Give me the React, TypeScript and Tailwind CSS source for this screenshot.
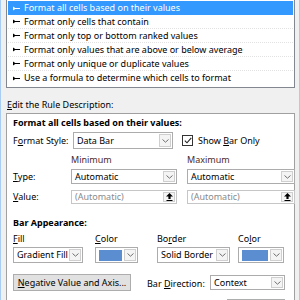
import React from 'react';

const font = { fontFamily: '"Noto Sans", "Open Sans", sans-serif' };

const rules = [
    'Format all cells based on their values',
    'Format only cells that contain',
    'Format only top or bottom ranked values',
    'Format only values that are above or below average',
    'Format only unique or duplicate values',
    'Use a formula to determine which cells to format',
];

const RuleArrow: React.FC<{ color: string }> = ({ color }) => (
    <svg width="7" height="5" viewBox="0 0 7 5" className="shrink-0">
        <path d="M0 0.5 L3 2.5 L0 4.5 Z" fill={color} />
        <rect x="0" y="2" width="7" height="1" fill={color} />
    </svg>
);

const Chevron = () => (
    <svg width="7" height="4" viewBox="0 0 7 4">
        <path d="M0.5 0.5 L3.5 3.2 L6.5 0.5" fill="none" stroke="#707070" strokeWidth="1" />
    </svg>
);

const UploadIcon = () => (
    <svg width="7" height="8" viewBox="0 0 7 8">
        <path d="M3.5 0 L7 3.5 L4.6 3.5 L4.6 6 L2.4 6 L2.4 3.5 L0 3.5 Z" fill="#000" />
        <rect x="0.5" y="7" width="6" height="1" fill="#000" />
    </svg>
);

// underline a single letter like a windows access key
const Key: React.FC<{ text: string; at: number }> = ({ text, at }) => (
    <span>
        {text.slice(0, at)}
        <span className="underline underline-offset-1">{text[at]}</span>
        {text.slice(at + 1)}
    </span>
);

const Dropdown: React.FC<{ w: string; h?: string; children?: React.ReactNode }> = ({ w, h = 'h-[15px]', children }) => (
    <div className={`${w} ${h} flex items-stretch border border-[#acacac] bg-white shrink-0`}>
        <div className="flex-1 flex items-center pl-[3px] overflow-hidden whitespace-nowrap">{children}</div>
        <div className="w-[12px] m-[1px] border border-[#cfcfcf] bg-[#f4f4f4] flex items-center justify-center">
            <Chevron />
        </div>
    </div>
);

const RangeInput: React.FC<{ w: string }> = ({ w }) => (
    <div className={`${w} h-[14px] flex items-stretch border border-[#c6c6c6] bg-white shrink-0`}>
        <div className="flex-1 flex items-center pl-[3px] text-[#8a8a8a]">(Automatic)</div>
        <div className="w-[12px] m-[1px] border border-[#cfcfcf] bg-[#f4f4f4] flex items-center justify-center">
            <UploadIcon />
        </div>
    </div>
);

const Swatch: React.FC = () => (
    <div className="h-full flex-1 flex items-center pr-[1px]">
        <div className="w-full h-[11px] bg-[#5b8ed1]" />
    </div>
);

export default function App() {
    return (
        <div
            className="w-[300px] h-[300px] overflow-hidden bg-[#f0f0f0] border-l border-r border-[#a9cdf2] pl-[5px] text-[9px] leading-[14px] text-black"
            style={font}
        >
            {/* rule type list */}
            <div className="w-[289px] border-x border-b border-[#828790] bg-white p-[1px] pb-[2px]">
                {rules.map((r, i) => (
                    <div
                        key={i}
                        className={`h-[14px] flex items-center gap-[4px] pl-[5px] whitespace-nowrap ${
                            i === 0
                                ? 'bg-[#3399ff] text-white'
                                : i < rules.length - 1
                                  ? 'border-b border-dotted border-[#e2e2e2]'
                                  : ''
                        }`}
                    >
                        <RuleArrow color={i === 0 ? '#ffffff' : '#000000'} />
                        <span>{r}</span>
                    </div>
                ))}
            </div>

            <div className="mt-[10px] pl-[1px] h-[14px]">
                <Key text="Edit the Rule Description:" at={0} />
            </div>

            {/* rule description panel */}
            <div className="mt-[1px] w-[289px] h-[200px] border border-[#a0a0a0] bg-white px-[6px] pt-[2px]">
                <div className="font-bold h-[14px]">Format all cells based on their values:</div>

                <div className="mt-[2px] h-[17px] flex items-center">
                    <div className="w-[60px]">
                        <Key text="Format Style:" at={1} />
                    </div>
                    <Dropdown w="w-[100px]" h="h-[17px]">Data Bar</Dropdown>
                    <div className="ml-[9px] w-[11px] h-[11px] border border-[#333] bg-white flex items-center justify-center">
                        <svg width="8" height="7" viewBox="0 0 8 7">
                            <path d="M0.8 3.6 L3 5.8 L7.3 0.8" fill="none" stroke="#222" strokeWidth="1.1" />
                        </svg>
                    </div>
                    <div className="ml-[5px]">
                        <Key text="Show Bar Only" at={5} />
                    </div>
                </div>

                <div className="grid grid-cols-[48px_106px_108px] gap-x-[10px] mt-[4px]">
                    <div />
                    <div className="h-[14px] text-[#4d2a2a]">Minimum</div>
                    <div className="h-[14px] text-[#4d2a2a]">Maximum</div>

                    <div className="mt-[2px] h-[15px] flex items-center">
                        <Key text="Type:" at={0} />
                    </div>
                    <div className="mt-[2px]">
                        <Dropdown w="w-[106px]">Automatic</Dropdown>
                    </div>
                    <div className="mt-[2px]">
                        <Dropdown w="w-[108px]">Automatic</Dropdown>
                    </div>

                    <div className="mt-[6px] h-[14px] flex items-center">
                        <Key text="Value:" at={0} />
                    </div>
                    <div className="mt-[6px]">
                        <RangeInput w="w-[106px]" />
                    </div>
                    <div className="mt-[6px]">
                        <RangeInput w="w-[108px]" />
                    </div>
                </div>

                <div className="mt-[12px] h-[14px] font-bold">Bar Appearance:</div>

                <div className="mt-[2px] flex h-[14px]">
                    <div className="w-[82px]">
                        <Key text="Fill" at={0} />
                    </div>
                    <div className="w-[62px]">
                        <Key text="Color" at={0} />
                    </div>
                    <div className="w-[81px]">
                        <Key text="Border" at={2} />
                    </div>
                    <div>
                        <Key text="Color" at={2} />
                    </div>
                </div>

                <div className="mt-[1px] flex h-[16px]">
                    <Dropdown w="w-[70px]" h="h-[16px]">Gradient Fill</Dropdown>
                    <div className="ml-[12px]">
                        <Dropdown w="w-[43px]" h="h-[16px]">
                            <Swatch />
                        </Dropdown>
                    </div>
                    <div className="ml-[19px]">
                        <Dropdown w="w-[73px]" h="h-[16px]">Solid Border</Dropdown>
                    </div>
                    <div className="ml-[8px]">
                        <Dropdown w="w-[46px]" h="h-[16px]">
                            <Swatch />
                        </Dropdown>
                    </div>
                </div>

                <div className="mt-[11px] flex items-center">
                    <button className="w-[118px] h-[17px] border border-[#adadad] bg-[#e1e1e1] flex items-center justify-center">
                        <Key text="Negative Value and Axis..." at={0} />
                    </button>
                    <div className="ml-[16px] w-[63px] pt-[2px]">
                        <Key text="Bar Direction:" at={4} />
                    </div>
                    <Dropdown w="w-[75px]">Context</Dropdown>
                </div>

                <div className="mt-[8px] ml-[214px] w-[58px] h-[12px] border border-[#adadad] bg-[#e1e1e1]" />
            </div>
        </div>
    );
}
